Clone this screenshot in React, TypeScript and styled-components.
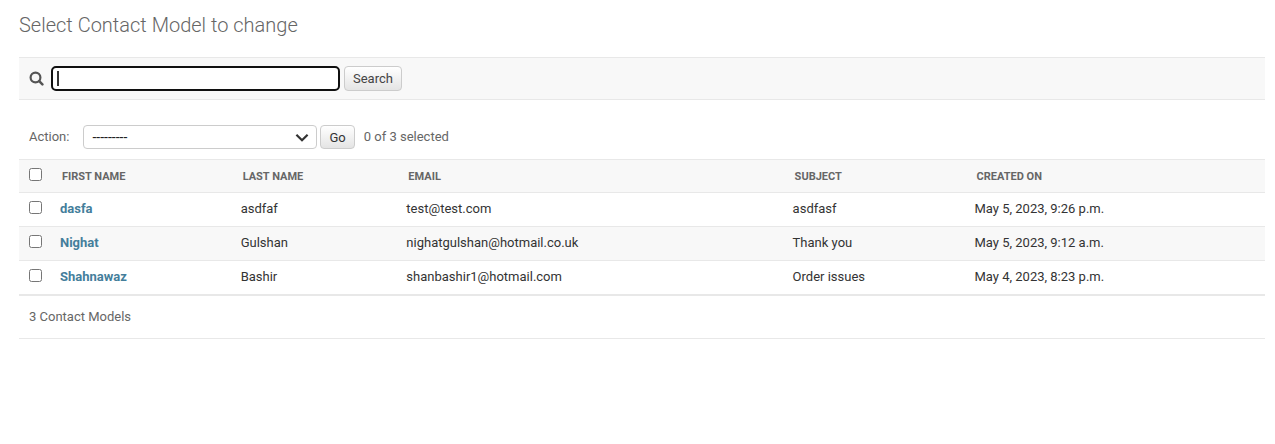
import React, { useState } from "react";
import styled, { createGlobalStyle } from "styled-components";

const GlobalStyle = createGlobalStyle`
  * { box-sizing: border-box; }
  body {
    margin: 0;
    background: #fff;
    color: #333;
    font-family: Roboto, "Liberation Sans", sans-serif;
    font-size: 13px;
    line-height: 16px;
  }
  input, select, button { font: inherit; margin: 0; }
`;

const Page = styled.main`
  padding: 12px 10px 40px 19px;
`;

const Title = styled.h1`
  margin: 0 0 19px;
  color: #666;
  font-size: 20px;
  font-weight: 300;
  line-height: 26px;
`;

const SearchBar = styled.form`
  display: flex;
  align-items: center;
  gap: 4px;
  padding: 8px 10px;
  background: #f8f8f8;
  border-top: 1px solid #e8e8e8;
  border-bottom: 1px solid #e8e8e8;
`;

const SearchLabel = styled.label`
  display: flex;
  width: 18px;
  color: #555;
`;

const SearchField = styled.div`
  position: relative;
  display: flex;
  width: 289px;
`;

const SearchInput = styled.input`
  width: 100%;
  height: 25px;
  padding: 2px 6px;
  color: #333;
  caret-color: transparent;
  background: #fff;
  border: 2px solid #101010;
  border-radius: 5px;
  outline: none;
`;

const Caret = styled.span`
  position: absolute;
  top: 5px;
  left: 6px;
  width: 2px;
  height: 15px;
  background: #333;
`;

const Button = styled.button<{ $compact?: boolean }>`
  height: ${(p) => (p.$compact ? 24 : 25)}px;
  padding: ${(p) => (p.$compact ? "2px 8px 0" : "0 8px")};
  color: ${(p) => (p.$compact ? "#333" : "#444")};
  background: linear-gradient(#fff, #e4e4e4);
  border: 1px solid #ccc;
  border-radius: 4px;
  cursor: pointer;
`;

const Actions = styled.form`
  display: flex;
  align-items: center;
  padding: 25px 10px 10px;
  color: #666;
`;

const ActionLabel = styled.label`
  margin-right: 14px;
`;

const SelectWrap = styled.div`
  position: relative;
  display: flex;
  width: 234px;
  margin-right: 3px;
`;

const Select = styled.select`
  appearance: none;
  width: 100%;
  height: 24px;
  padding: 0 24px 0 8px;
  color: #222;
  background: #fff;
  border: 1px solid #ccc;
  border-radius: 4px;
  font-size: 14px;
`;

const Chevron = styled.svg`
  position: absolute;
  top: 8px;
  right: 8px;
  pointer-events: none;
`;

const Counter = styled.span`
  margin-left: 9px;
`;

const Table = styled.table`
  width: 100%;
  table-layout: fixed;
  border-collapse: separate;
  border-spacing: 0;
  border-top: 1px solid #e8e8e8;
`;

const Column = styled.col<{ $width: string }>`
  width: ${(p) => p.$width};
`;

const HeadCell = styled.th`
  height: 33px;
  padding: 9px 10px 7px;
  text-align: left;
  vertical-align: top;
  color: #666;
  background: #f8f8f8;
  border-bottom: 1px solid #e8e8e8;
  font-size: 11px;
  font-weight: 700;
  text-transform: uppercase;
`;

const Row = styled.tr`
  &:nth-child(even) { background: #f8f8f8; }
`;

const Cell = styled.td`
  height: 34px;
  padding: 8px;
  text-align: left;
  vertical-align: top;
  border-bottom: 1px solid #e8e8e8;
  font-weight: 400;
`;

const CheckHead = styled(HeadCell)`
  padding: 8px 8px 8px 10px;
`;

const CheckCell = styled(Cell)`
  padding-left: 10px;
`;

const Checkbox = styled.input`
  display: block;
  width: 13px;
  height: 13px;
`;

const NameLink = styled.a`
  color: #447e9b;
  font-weight: 700;
  text-decoration: none;
`;

const Paginator = styled.p`
  margin: 0;
  padding: 13px 10px;
  color: #666;
  border-top: 1px solid #e8e8e8;
  border-bottom: 1px solid #e8e8e8;
`;

const contacts = [
  { first: "dasfa", last: "asdfaf", email: "test@test.com", subject: "asdfasf", created: "May 5, 2023, 9:26 p.m." },
  { first: "Nighat", last: "Gulshan", email: "nighatgulshan@hotmail.co.uk", subject: "Thank you", created: "May 5, 2023, 9:12 a.m." },
  { first: "Shahnawaz", last: "Bashir", email: "shanbashir1@hotmail.com", subject: "Order issues", created: "May 4, 2023, 8:23 p.m." },
];

export default function App() {
  const [selected, setSelected] = useState<string[]>([]);
  const [query, setQuery] = useState("");
  const toggle = (name: string) =>
    setSelected((s) => (s.includes(name) ? s.filter((n) => n !== name) : [...s, name]));
  const all = selected.length === contacts.length;

  return (
    <>
      <GlobalStyle />
      <Page>
        <Title>Select Contact Model to change</Title>
        <SearchBar onSubmit={(e) => e.preventDefault()}>
          <SearchLabel htmlFor="searchbar" aria-label="Search contacts">
            <svg width="15" height="15" viewBox="0 0 15 15" fill="none" stroke="currentColor" aria-hidden="true">
              <circle cx="6.5" cy="6.5" r="4.9" strokeWidth="2.2" />
              <path d="M10.2 10.2l3.2 3.2" strokeWidth="2.5" strokeLinecap="round" />
            </svg>
          </SearchLabel>
          <SearchField>
            <SearchInput id="searchbar" type="text" value={query} onChange={(e) => setQuery(e.target.value)} />
            {query === "" && <Caret />}
          </SearchField>
          <Button type="submit">Search</Button>
        </SearchBar>
        <Actions onSubmit={(e) => e.preventDefault()}>
          <ActionLabel htmlFor="action">Action:</ActionLabel>
          <SelectWrap>
            <Select id="action" defaultValue="">
              <option value="">---------</option>
            </Select>
            <Chevron width="14" height="10" viewBox="0 0 14 10" fill="none" stroke="#333" strokeWidth="2.2" aria-hidden="true">
              <path d="M1.4 1.7L7 7.3l5.6-5.6" />
            </Chevron>
          </SelectWrap>
          <Button type="submit" $compact>Go</Button>
          <Counter>{selected.length} of 3 selected</Counter>
        </Actions>
        <Table>
          <colgroup>
            <Column $width="33px" />
            <Column $width="14.5%" />
            <Column $width="13.3%" />
            <Column $width="31%" />
            <Column $width="14.6%" />
            <Column $width="auto" />
          </colgroup>
          <thead>
            <tr>
              <CheckHead scope="col">
                <Checkbox
                  type="checkbox"
                  aria-label="Select all contacts"
                  checked={all}
                  onChange={() => setSelected(all ? [] : contacts.map((c) => c.first))}
                />
              </CheckHead>
              <HeadCell scope="col">First name</HeadCell>
              <HeadCell scope="col">Last name</HeadCell>
              <HeadCell scope="col">Email</HeadCell>
              <HeadCell scope="col">Subject</HeadCell>
              <HeadCell scope="col">Created on</HeadCell>
            </tr>
          </thead>
          <tbody>
            {contacts.map((c) => (
              <Row key={c.first}>
                <CheckCell>
                  <Checkbox
                    type="checkbox"
                    aria-label={`Select ${c.first}`}
                    checked={selected.includes(c.first)}
                    onChange={() => toggle(c.first)}
                  />
                </CheckCell>
                <Cell as="th" scope="row"><NameLink href="#">{c.first}</NameLink></Cell>
                <Cell>{c.last}</Cell>
                <Cell>{c.email}</Cell>
                <Cell>{c.subject}</Cell>
                <Cell>{c.created}</Cell>
              </Row>
            ))}
          </tbody>
        </Table>
        <Paginator>3 Contact Models</Paginator>
      </Page>
    </>
  );
}
